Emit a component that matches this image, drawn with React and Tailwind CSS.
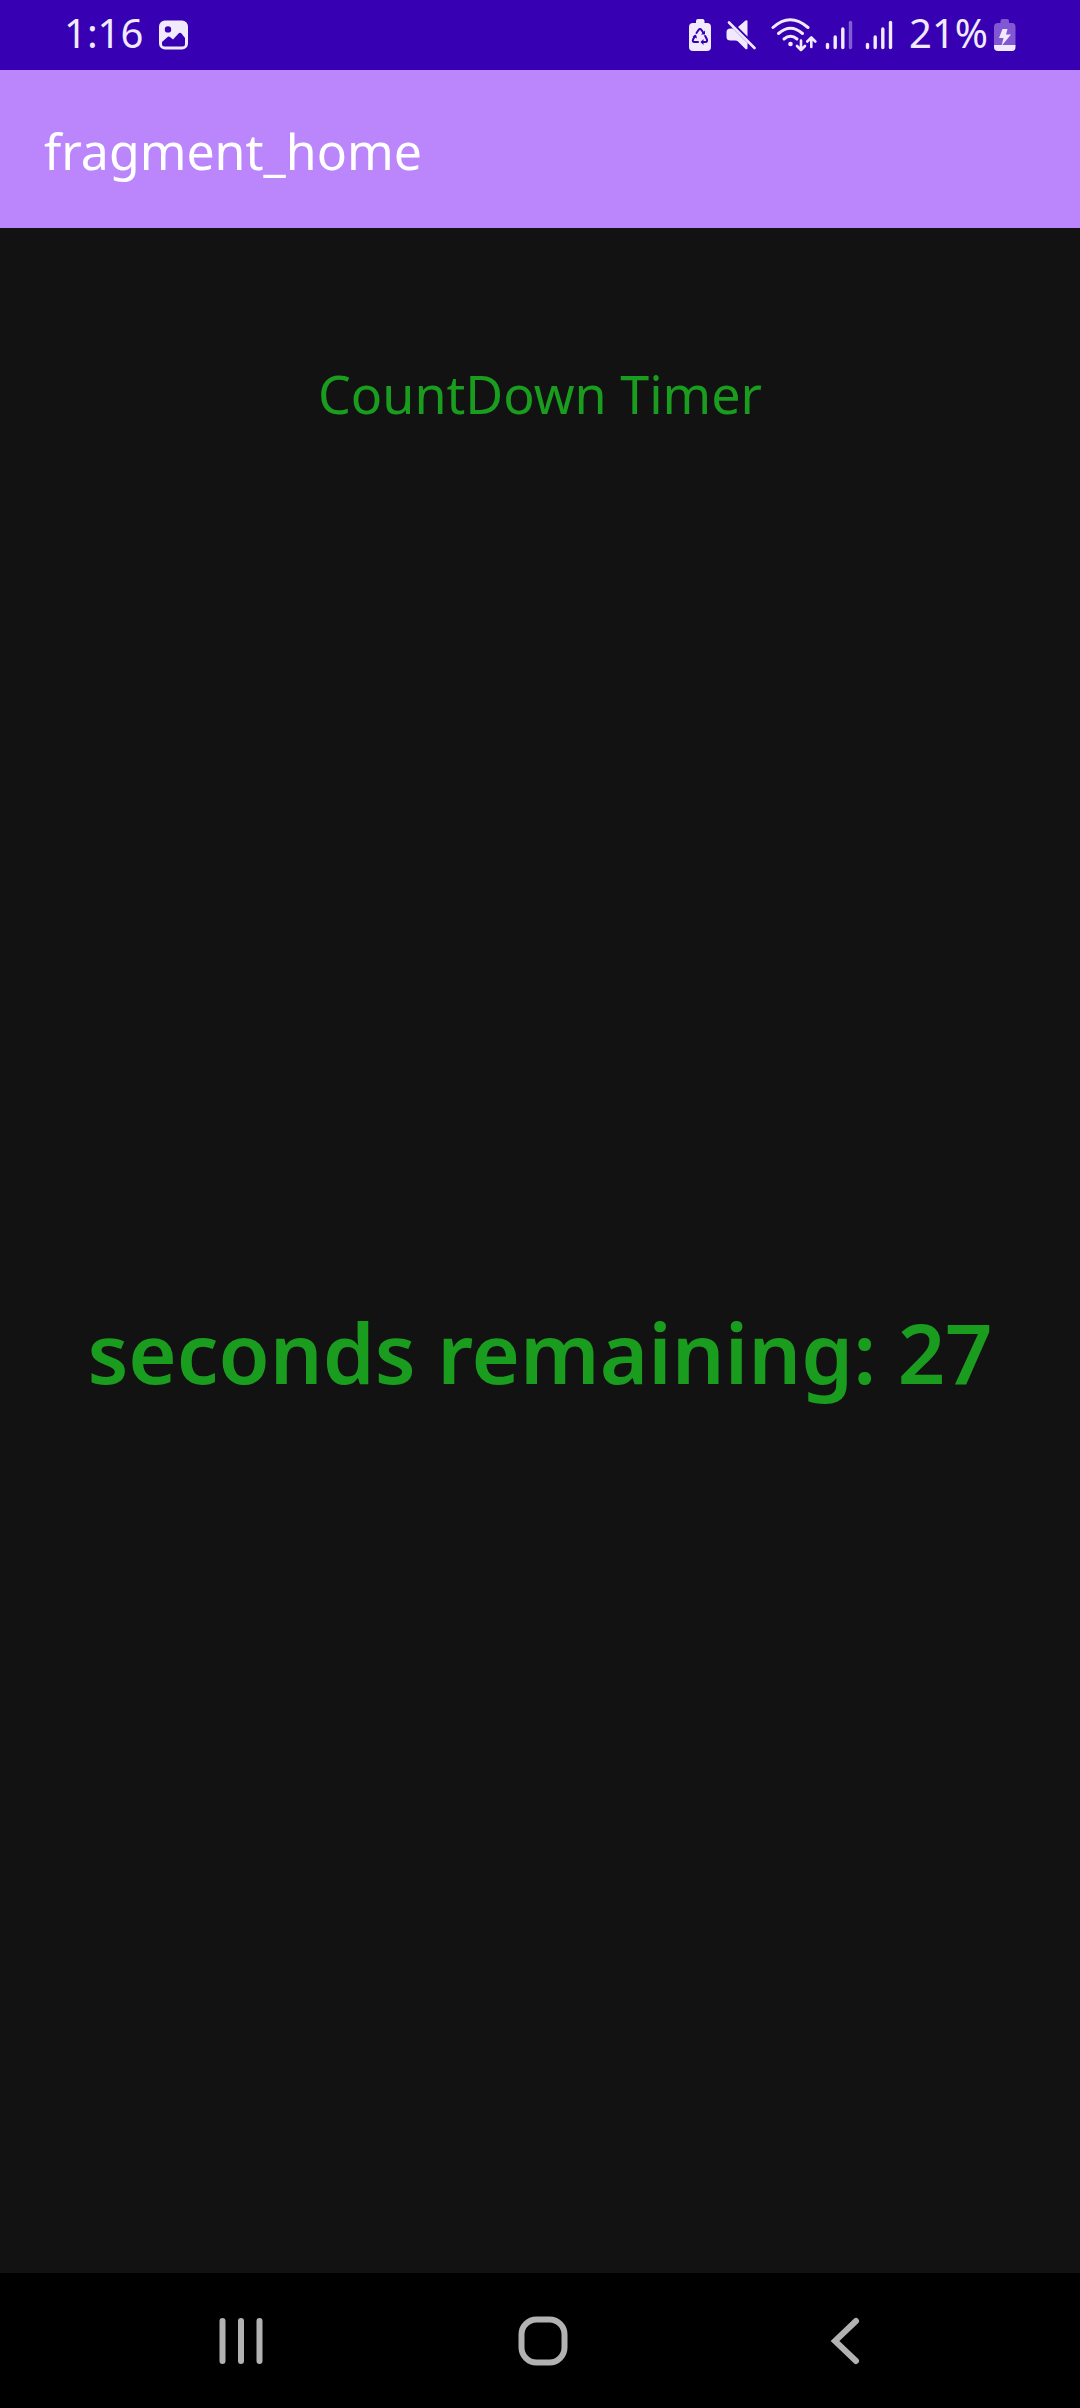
const FONT = "font-['Noto_Sans','Open_Sans',sans-serif]";

function ImageIcon() {
  return (
    <svg width="30" height="30" viewBox="0 0 30 30" aria-hidden="true">
      <path
        fillRule="evenodd"
        fill="#F1EAFF"
        d="M6 0.5H23A6 6 0 0 1 29 6.500V23.500A6 6 0 0 1 23 29.500H6A6 6 0 0 1 0 23.500V6.500A6 6 0 0 1 6 0.500ZM9 6.200A3.200 3.200 0 1 0 9 12.600A3.200 3.200 0 1 0 9 6.200ZM3 22V24A2.500 2.500 0 0 0 5.500 26.500H23.500A2.500 2.500 0 0 0 26 24V18L22.500 13.500Q21 12 19.500 13.500L14 19.500L11 17Q9.500 16 8 17.500Z"
      />
    </svg>
  );
}

function RecycleBatteryIcon() {
  return (
    <svg width="22" height="32" viewBox="0 0 22 32" aria-hidden="true">
      <path fill="#F1EAFF" d="M7 4V2Q7 0 9 0H13.500Q15.500 0 15.500 2V4H18Q22 4 22 8V28Q22 32 18 32H4Q0 32 0 28V8Q0 4 4 4Z" />
      <g fill="none" stroke="#3700B3" strokeWidth="2" strokeLinecap="round" strokeLinejoin="round">
        <path d="M7.500 14L9.500 11Q11 9 12.500 11L14.500 14" />
        <path d="M16.200 17L18 20.500Q18.500 23 16.500 23H13" />
        <path d="M9 23H5.500Q3.200 23 4 20.500L6 17" />
      </g>
      <path fill="#3700B3" d="M12 15.500L16 15.500L16 11.500ZM14.500 20V26L11.500 23ZM3.500 17.500L7 15.500L8 19.500Z" />
    </svg>
  );
}

function MuteIcon() {
  return (
    <svg width="30" height="32" viewBox="0 0 30 32" aria-hidden="true">
      <path fill="#F1EAFF" d="M12 8L19.500 1.500Q21.500 0.500 21.500 2.500V17.500ZM4.500 9.500H7L21.500 24V29Q21.500 31 19.500 30L12 22.500Q11 21.500 9 21.500H4.500Q0.500 21.500 0.500 18V13Q0.500 9.500 4.500 9.500Z" />
      <path stroke="#F1EAFF" strokeWidth="2.600" strokeLinecap="round" d="M3 3.500L28.500 29" />
    </svg>
  );
}

function WifiIcon() {
  return (
    <svg width="46" height="34" viewBox="0 0 46 34" aria-hidden="true">
      <g fill="none" stroke="#F1EAFF" strokeWidth="3" strokeLinecap="round">
        <path d="M2 9.500Q19 -6 37 9.500" />
        <path d="M7.500 15.500Q19.500 5 31.500 15.500" />
        <path d="M13 21Q19.500 15.500 26 21" />
      </g>
      <circle cx="19.500" cy="26" r="2.300" fill="#F1EAFF" />
      <g fill="none" stroke="#F1EAFF" strokeWidth="2.600" strokeLinecap="round" strokeLinejoin="round">
        <path d="M30 22.500V32M26 28L30 32L34 28" />
        <path d="M40.300 29V19.500M36.300 23.500L40.300 19.500L44.300 23.500" />
      </g>
    </svg>
  );
}

function SignalIcon({ weak }) {
  return (
    <svg width="28" height="30" viewBox="0 0 28 30" fill="none" stroke="#F1EAFF" strokeWidth="3.400" strokeLinecap="round" aria-hidden="true">
      <path d="M2.500 24.500V27.500M10.200 17V27.500M17.800 9V27.500" />
      <path d="M25.500 2.500V27.500" opacity={weak ? 0.4 : 1} />
    </svg>
  );
}

function ChargingIcon() {
  return (
    <svg width="22" height="32" viewBox="0 0 22 32" aria-hidden="true">
      <path fill="#8257D2" d="M6.500 4V2Q6.500 0 8.500 0H13Q15 0 15 2V4H18Q21.500 4 21.500 8V26H0V8Q0 4 4 4Z" />
      <path fill="#F1EAFF" d="M0 26H21.500V28Q21.500 32 18 32H4Q0 32 0 28Z" />
      <path fill="#F1EAFF" d="M8.500 10H13.500L12 15.500H17L7.500 27L9.500 19H5Z" />
    </svg>
  );
}

function NavButton({ label, children }) {
  return (
    <button type="button" aria-label={label} className="flex items-center justify-center">
      <svg width="52" height="52" viewBox="0 0 52 52" fill="none" stroke="#B2B2B2" strokeWidth="6" strokeLinecap="round" aria-hidden="true">
        {children}
      </svg>
    </button>
  );
}

export default function App() {
  return (
    <div className={`${FONT} flex min-h-screen flex-col bg-[#121212]`}>
      <div className="flex h-[70px] shrink-0 items-center justify-between bg-[#3700B3] pl-16 pr-16 text-[40px] leading-none text-[#F1EAFF]">
        <div className="flex items-center gap-4">
          <span className="pb-1">1:16</span>
          <ImageIcon />
        </div>
        <div className="flex items-center">
          <div className="flex items-center gap-[15px]">
            <RecycleBatteryIcon />
            <MuteIcon />
            <WifiIcon />
          </div>
          <div className="ml-2 mr-4 flex items-center gap-3">
            <SignalIcon weak />
            <SignalIcon />
          </div>
          <div className="flex items-center gap-[6px]">
            <span className="pb-1">21%</span>
            <ChargingIcon />
          </div>
        </div>
      </div>

      <header className="flex h-[158px] shrink-0 items-center bg-[#BB86FC] px-11">
        <h1 className="pt-1 text-[50px] leading-none text-white">fragment_home</h1>
      </header>

      <main className="flex flex-1 flex-col items-center pt-32 text-center text-[#1A9C1F]">
        <h2 className="text-[52px] leading-[76px]">CountDown Timer</h2>
        <p className="mt-[860px] text-[83px] font-semibold leading-[120px]">seconds remaining: 27</p>
      </main>

      <nav className="grid h-[135px] shrink-0 grid-cols-3 bg-black pl-[90px] pr-[84px]">
        <NavButton label="Recent apps">
          <path d="M7.500 6V46M26 6V46M44.500 6V46" />
        </NavButton>
        <NavButton label="Home">
          <rect x="4.500" y="4.500" width="43" height="43" rx="15" />
        </NavButton>
        <NavButton label="Back">
          <path d="M37 6L16 26L37 46" />
        </NavButton>
      </nav>
    </div>
  );
}
